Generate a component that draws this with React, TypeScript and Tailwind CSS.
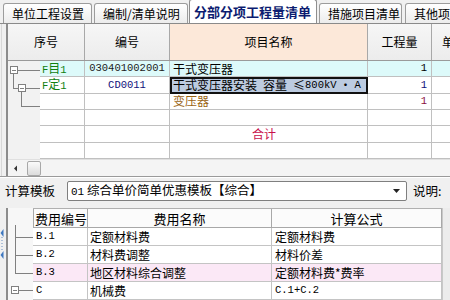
import React from "react";

const M = ({ children, c = "" }: { children: React.ReactNode; c?: string }) => (
  <span className={`font-['Liberation_Mono',monospace] text-[10.5px] ${c}`}>{children}</span>
);

function Tab({ label, w, active }: { label: string; w: string; active?: boolean }) {
  if (active) {
    return (
      <div className={`${w} h-[24px] shrink-0 bg-white border border-b-0 border-[#8e8e8e] rounded-t-[3px] flex items-center pl-[4px] text-[13px] font-bold text-[#0c1c70] whitespace-nowrap overflow-hidden`}>
        {label}
      </div>
    );
  }
  return (
    <div className={`${w} h-[20px] shrink-0 bg-gradient-to-b from-[#ffffff] to-[#ececec] border border-b-0 border-[#9c9c9c] rounded-t-[3px] flex items-center pl-[8px] whitespace-nowrap overflow-hidden`}>
      {label}
    </div>
  );
}

function Row1({
  bg = "bg-white",
  a,
  b,
  c,
  d,
  sel,
}: {
  bg?: string;
  a?: React.ReactNode;
  b?: React.ReactNode;
  c?: React.ReactNode;
  d?: React.ReactNode;
  sel?: boolean;
}) {
  return (
    <div className={`flex h-[18px] ${bg}`}>
      <div className="w-[45px] shrink-0 border-r border-b border-[#c0c0c0] flex items-center pl-[2px] whitespace-nowrap">{a}</div>
      <div className="w-[85px] shrink-0 border-r border-b border-[#c0c0c0] flex items-center justify-center">{b}</div>
      {sel ? (
        <div className="w-[198px] shrink-0 border-2 border-[#111111] bg-[#bccbe0] flex items-center pl-[1px] whitespace-nowrap">{c}</div>
      ) : (
        <div className="w-[198px] shrink-0 border-r border-b border-[#c0c0c0] flex items-center pl-[3px] whitespace-nowrap">{c}</div>
      )}
      <div className="w-[64px] shrink-0 border-r border-b border-[#c0c0c0] flex items-center justify-end pr-[4px]">{d}</div>
      <div className="flex-1 border-b border-[#c0c0c0]"></div>
    </div>
  );
}

function Row2({
  bg = "bg-white",
  a,
  b,
  c,
}: {
  bg?: string;
  a?: React.ReactNode;
  b?: React.ReactNode;
  c?: React.ReactNode;
}) {
  return (
    <div className={`flex h-[18px] ${bg}`}>
      <div className="w-[55px] shrink-0 border-r border-b border-[#c4c4c4] flex items-center pl-[3px]">{a}</div>
      <div className="w-[184px] shrink-0 border-r border-b border-[#c4c4c4] flex items-center pl-[2px] whitespace-nowrap">{b}</div>
      <div className="w-[170px] shrink-0 border-r border-b border-[#c4c4c4] flex items-center pl-[3px] whitespace-nowrap">{c}</div>
    </div>
  );
}

export default function App() {
  return (
    <div className="w-[450px] h-[300px] overflow-hidden bg-[#f0f0f0] flex flex-col text-[12px] leading-none text-black font-['Noto_Sans_CJK_SC',sans-serif]">
      {/* Tabs */}
      <div className="h-[23px] shrink-0 flex items-end pl-[3px]">
        <Tab label="单位工程设置" w="w-[89px]" />
        <div className="w-[2px] shrink-0" />
        <Tab label="编制/清单说明" w="w-[94px]" />
        <div className="w-[1px] shrink-0" />
        <Tab label="分部分项工程量清单" w="w-[128px]" active />
        <div className="w-[2px] shrink-0" />
        <Tab label="措施项目清单" w="w-[83px]" />
        <div className="w-[3px] shrink-0" />
        <Tab label="其他项目清单" w="w-[80px]" />
      </div>

      {/* Table 1 section */}
      <div className="flex h-[153px] shrink-0 border-t border-[#8a8a8a]">
        <div className="w-[8px] shrink-0 flex">
          <div className="w-[2px] border-r border-[#d8d8d8]" />
          <div className="w-[4px]" />
          <div className="w-[2px] bg-[#8c8c8c]" />
        </div>
        <div className="flex-1 flex flex-col min-w-0">
          {/* header */}
          <div className="flex h-[37px] shrink-0 border-b border-[#9a9a9a] bg-gradient-to-b from-[#f6f6f6] to-[#ececec]">
            <div className="w-[77px] shrink-0 border-r border-[#a8a8a8] flex items-center justify-center">序号</div>
            <div className="w-[85px] shrink-0 border-r border-[#a8a8a8] flex items-center justify-center">编号</div>
            <div className="w-[198px] shrink-0 border-r border-[#a8a8a8] bg-[#fce8d9] flex items-center justify-center">项目名称</div>
            <div className="w-[64px] shrink-0 border-r border-[#a8a8a8] flex items-center justify-center">工程量</div>
            <div className="flex-1 flex items-center pl-[10px] overflow-hidden whitespace-nowrap">单价</div>
          </div>
          {/* body */}
          <div className="flex h-[98px] shrink-0 overflow-hidden">
            <div className="w-[32px] shrink-0 bg-[#f2f2f2]">
              <svg width="32" height="98" viewBox="0 0 32 98">
                <g stroke="#808080" strokeWidth="1" fill="none" shapeRendering="crispEdges">
                  <line x1="5.5" y1="13" x2="5.5" y2="27.5" />
                  <line x1="5.5" y1="27.5" x2="10" y2="27.5" />
                  <line x1="10" y1="9.5" x2="32" y2="9.5" />
                  <rect x="2.5" y="5.5" width="7" height="7" fill="#ffffff" />
                  <line x1="4" y1="9.5" x2="8" y2="9.5" />
                  <line x1="13.5" y1="31" x2="13.5" y2="45.5" />
                  <line x1="13.5" y1="45.5" x2="32" y2="45.5" />
                  <line x1="18" y1="27.5" x2="32" y2="27.5" />
                  <rect x="10.5" y="23.5" width="7" height="7" fill="#ffffff" />
                  <line x1="12" y1="27.5" x2="16" y2="27.5" />
                </g>
              </svg>
            </div>
            <div className="flex-1 flex flex-col min-w-0">
              <Row1
                bg="bg-[#ddfafa]"
                a={<span className="text-[#108010]"><M>F</M>目<M>1</M></span>}
                b={<M c="text-[#202020]">030401002001</M>}
                c={<span>干式变压器</span>}
                d={<M>1</M>}
              />
              <Row1
                a={<span className="text-[#108010]"><M>F</M>定<M>1</M></span>}
                b={<M c="text-[#10107a]">CD0011</M>}
                sel
                c={
                  <span className="flex items-center">
                    <span>干式变压器安装</span>
                    <span className="ml-[6px]">容量</span>
                    <span className="ml-[6px]">≤</span>
                    <M>800kV</M>
                    <span className="mx-[3px]">·</span>
                    <M>A</M>
                  </span>
                }
                d={<M c="text-[#10107a]">1</M>}
              />
              <Row1 c={<span className="text-[#9a6414]">变压器</span>} d={<M c="text-[#8a1040]">1</M>} />
              <Row1 />
              <Row1 c={<span className="block w-full text-center text-[#c8104a] pr-[12px]">合计</span>} />
              <Row1 />
            </div>
          </div>
          {/* scrollbar */}
          <div className="flex h-[17px] shrink-0 items-center bg-[#f4f4f4] border-t border-[#e0e0e0]">
            <div className="w-[16px] h-[15px] flex items-center justify-center">
              <svg width="6" height="7" viewBox="0 0 6 7">
                <path d="M4 0.5 L1 3.5 L4 6.5 Z" fill="#333333" />
              </svg>
            </div>
            <div className="w-[3px]" />
            <div className="w-[14px] h-[15px] border border-[#a8a8a8] rounded-[2px] bg-gradient-to-b from-[#fbfbfb] to-[#dcdcdc]" />
          </div>
        </div>
      </div>

      {/* separator */}
      <div className="h-[2px] shrink-0 border-t border-[#9a9a9a] bg-white" />

      {/* template row */}
      <div className="h-[30px] shrink-0 flex items-start pt-[3px] text-[12.5px]">
        <div className="w-[67px] shrink-0 h-[20px] flex items-center pl-[5px]">计算模板</div>
        <div className="w-[340px] shrink-0 h-[20px] bg-white border border-[#7f7f7f] rounded-[2px] flex items-center pl-[3px] whitespace-nowrap">
          <span className="flex-1">
            <M c="text-[11px]">01</M> 综合单价简单优惠模板【综合】
          </span>
          <svg width="7" height="4" viewBox="0 0 7 4" className="mr-[6px]">
            <path d="M0 0 L7 0 L3.5 4 Z" fill="#222222" />
          </svg>
        </div>
        <div className="h-[20px] flex items-center pl-[6px] whitespace-nowrap">说明:</div>
      </div>

      {/* Table 2 */}
      <div className="flex flex-1 min-h-0">
        <div className="w-[8px] shrink-0 flex">
          <div className="w-[6px]">
            <svg width="6" height="92" viewBox="0 0 6 92">
              <path d="M3.5 21 L0.5 25 L3.5 29 Z" fill="#3f78c0" />
              <path d="M3.5 43 L0.5 47 L3.5 51 Z" fill="#3f78c0" />
              <line x1="2" y1="29" x2="2" y2="43" stroke="#6b8fc0" strokeDasharray="1 2" />
            </svg>
          </div>
          <div className="w-[2px] bg-[#8c8c8c]" />
        </div>
        <div className="w-[25px] shrink-0 bg-[#f7f7f7]">
          <svg width="25" height="92" viewBox="0 0 25 92">
            <g stroke="#808080" strokeWidth="1" fill="none" shapeRendering="crispEdges">
              <line x1="7.5" y1="17" x2="7.5" y2="65.5" />
              <line x1="7.5" y1="29.5" x2="25" y2="29.5" />
              <line x1="7.5" y1="47.5" x2="25" y2="47.5" />
              <line x1="7.5" y1="65.5" x2="25" y2="65.5" />
              <line x1="11" y1="82.5" x2="25" y2="82.5" />
              <rect x="3.5" y="78.5" width="7" height="7" fill="#ffffff" />
              <line x1="5" y1="82.5" x2="9" y2="82.5" />
            </g>
          </svg>
        </div>
        <div className="flex flex-col">
          <div className="flex h-[20px] shrink-0 bg-[#fbfbfb] border-t border-[#b0b0b0] text-[13px]">
            <div className="w-[55px] shrink-0 border-r border-b border-l border-[#a8a8a8] flex items-center pl-[1px]">费用编号</div>
            <div className="w-[184px] shrink-0 border-r border-b border-[#a8a8a8] flex items-center justify-center">费用名称</div>
            <div className="w-[170px] shrink-0 border-r border-b border-[#a8a8a8] flex items-center justify-center">计算公式</div>
          </div>
          <Row2 a={<M>B.1</M>} b="定额材料费" c="定额材料费" />
          <Row2 a={<M>B.2</M>} b="材料费调整" c="材料价差" />
          <Row2 bg="bg-[#fbe8f6]" a={<M>B.3</M>} b="地区材料综合调整" c="定额材料费*费率" />
          <Row2 a={<M>C</M>} b="机械费" c={<M>C.1+C.2</M>} />
        </div>
        <div className="flex-1 bg-[#ececec] border-l border-[#c8c8c8]" />
      </div>
    </div>
  );
}
